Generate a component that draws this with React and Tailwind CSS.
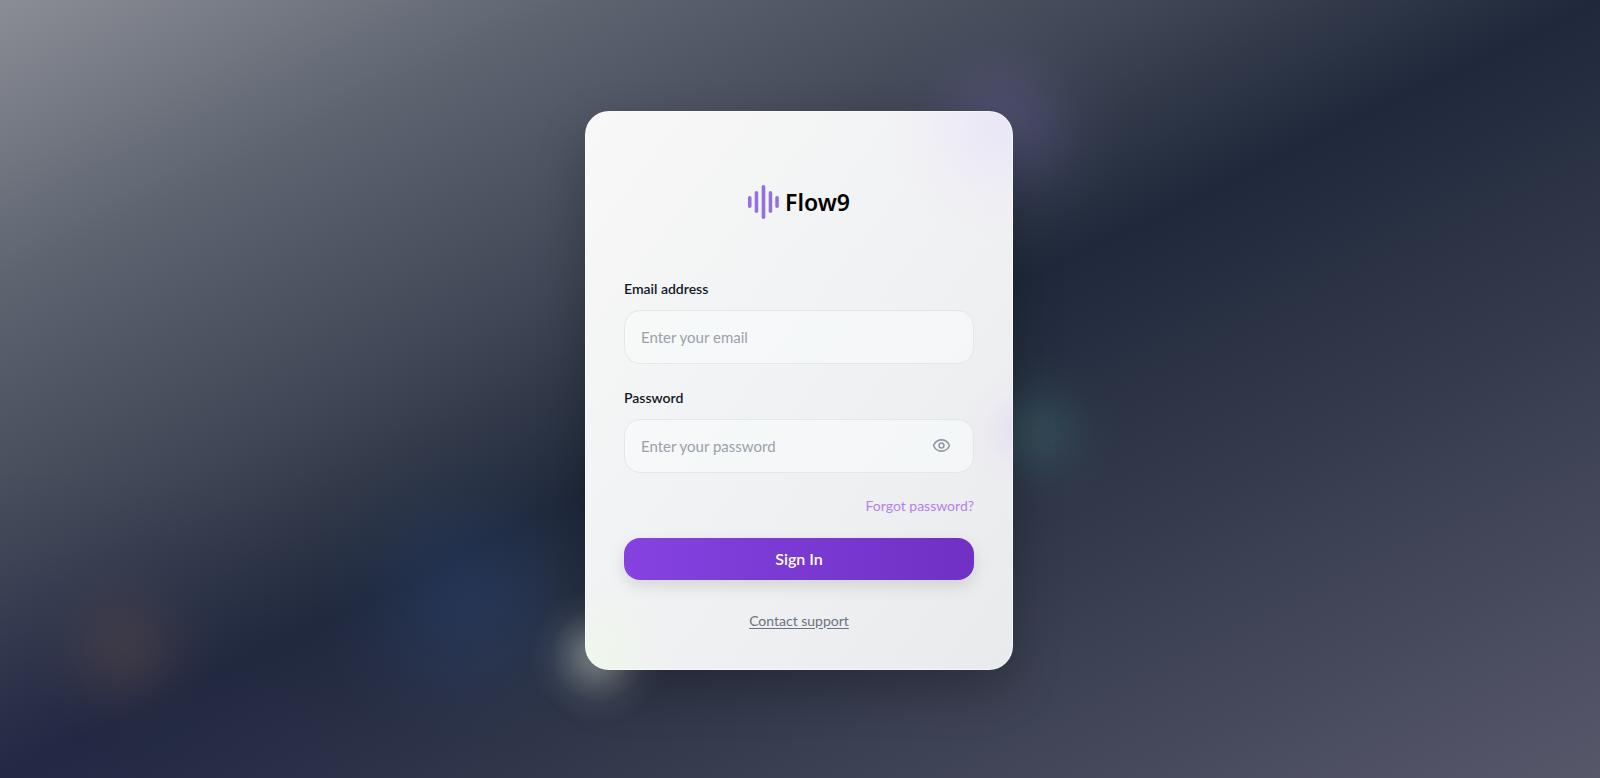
import { useState } from "react";

function Logo() {
  return (
    <div className="flex h-[34px] items-center justify-center gap-[6px]">
      <svg width="31" height="34" viewBox="0 0 31 34" aria-hidden="true" fill="#9370db">
        <rect x="0" y="11" width="3.5" height="12" rx="1.75" />
        <rect x="6.7" y="6" width="3.5" height="22" rx="1.75" />
        <rect x="13.7" y="0" width="3.6" height="34" rx="1.8" />
        <rect x="20.7" y="6" width="3.5" height="22" rx="1.75" />
        <rect x="27.3" y="11" width="3.5" height="12" rx="1.75" />
      </svg>
      <span className="font-['Noto_Sans',sans-serif] text-[23px] leading-[34px] font-semibold text-black">
        Flow9
      </span>
    </div>
  );
}

function EyeIcon() {
  return (
    <svg width="19" height="19" viewBox="0 0 24 24" fill="none" stroke="currentColor" strokeWidth="2" strokeLinecap="round" strokeLinejoin="round" aria-hidden="true">
      <path d="M2.1 12.35a1 1 0 0 1 0-.7C4 7.3 7.8 4.9 12 4.9s8 2.4 9.9 6.75a1 1 0 0 1 0 .7C20 16.7 16.2 19.1 12 19.1s-8-2.4-9.9-6.75" />
      <circle cx="12" cy="12" r="3.1" />
    </svg>
  );
}

const labelClass = "text-sm leading-5 font-semibold text-[#111827]";
const fieldClass =
  "flex h-[54px] items-center rounded-2xl border border-[#e4e6ea] bg-[#f9fbfb]/60 focus-within:border-purple-400";
const inputClass =
  "h-full min-w-0 flex-1 rounded-2xl bg-transparent px-4 text-[15px] text-gray-900 outline-none placeholder:text-[#9ca0ab]";

export default function App() {
  const [visible, setVisible] = useState(false);

  return (
    <main className="flex min-h-screen items-center justify-center bg-[radial-gradient(circle_at_62.5%_16.5%,rgba(110,100,160,0.36)_0,rgba(110,100,160,0.29)_28px,rgba(110,100,160,0.16)_56px,rgba(110,100,160,0.05)_84px,transparent_120px),radial-gradient(circle_at_64.8%_55.5%,rgba(66,120,120,0.32)_0,rgba(66,120,120,0.26)_18px,rgba(66,120,120,0.14)_36px,rgba(66,120,120,0.04)_56px,transparent_80px),radial-gradient(circle_at_29%_76.5%,rgba(45,80,150,0.26)_0,rgba(45,80,150,0.21)_35px,rgba(45,80,150,0.13)_70px,rgba(45,80,150,0.05)_105px,transparent_150px),radial-gradient(circle_at_7.8%_83.5%,rgba(125,88,70,0.24)_0,rgba(125,88,70,0.19)_22px,rgba(125,88,70,0.1)_45px,rgba(125,88,70,0.03)_68px,transparent_95px),radial-gradient(circle_at_37.4%_84.2%,rgba(190,202,196,0.58)_0,rgba(190,202,196,0.46)_16px,rgba(190,202,196,0.24)_32px,rgba(190,202,196,0.07)_48px,transparent_68px),radial-gradient(ellipse_at_0%_100%,rgba(48,36,100,0.24)_0,rgba(48,36,100,0.14)_220px,transparent_640px),linear-gradient(to_bottom_right,#8b8d95_0%,#5e6571_18%,#404655_36%,#1f293b_50%,#57576a_100%)] pt-[2px] pr-[18px] pl-4 font-[Lato,sans-serif]">
      <section className="w-full max-w-[428px] rounded-3xl bg-[radial-gradient(circle_at_96%_3%,rgba(228,220,250,0.5)_0,rgba(230,222,250,0.36)_35px,rgba(232,224,250,0.14)_70px,transparent_110px),radial-gradient(circle_at_102%_57%,rgba(214,204,246,0.42)_0,rgba(218,208,246,0.28)_18px,rgba(222,214,248,0.1)_38px,transparent_62px),radial-gradient(circle_at_2%_98%,rgba(238,250,230,0.6)_0,rgba(238,250,230,0.4)_28px,rgba(238,250,230,0.14)_52px,transparent_80px),linear-gradient(to_bottom_right,#f8f8f8,#f2f3f4_40%,#eeeff1_70%,#e9eaec)] px-[39px] pt-[74px] pb-[39px] shadow-[0_20px_50px_rgba(0,0,0,0.24),inset_0_0_0_1px_rgba(255,255,255,0.5)]">
        <Logo />
        <form className="flex flex-col pt-[60px]" onSubmit={(e) => e.preventDefault()}>
          <div className="flex flex-col gap-6">
            <div className="flex flex-col gap-[11px]">
              <label htmlFor="email" className={labelClass}>
                Email address
              </label>
              <div className={fieldClass}>
                <input id="email" type="email" placeholder="Enter your email" className={inputClass} />
              </div>
            </div>
            <div className="flex flex-col gap-[11px]">
              <label htmlFor="password" className={labelClass}>
                Password
              </label>
              <div className={fieldClass}>
                <input id="password" type={visible ? "text" : "password"} placeholder="Enter your password" className={inputClass} />
                <button
                  type="button"
                  aria-label="Show password"
                  onClick={() => setVisible(!visible)}
                  className="mr-[22px] text-[#9498a5]"
                >
                  <EyeIcon />
                </button>
              </div>
            </div>
          </div>
          <a href="#forgot" className="mt-[23px] self-end text-sm leading-5 text-[#b57fee]">
            Forgot password?
          </a>
          <button
            type="submit"
            className="mt-[22px] h-[42px] rounded-2xl bg-[linear-gradient(to_right,#8542e0,#7030c4)] text-base font-semibold text-white shadow-[0_6px_16px_rgba(0,0,0,0.12)]"
          >
            Sign In
          </button>
          <a href="#support" className="mt-[31px] self-center text-sm leading-5 text-[#6b7280] underline underline-offset-2">
            Contact support
          </a>
        </form>
      </section>
    </main>
  );
}
